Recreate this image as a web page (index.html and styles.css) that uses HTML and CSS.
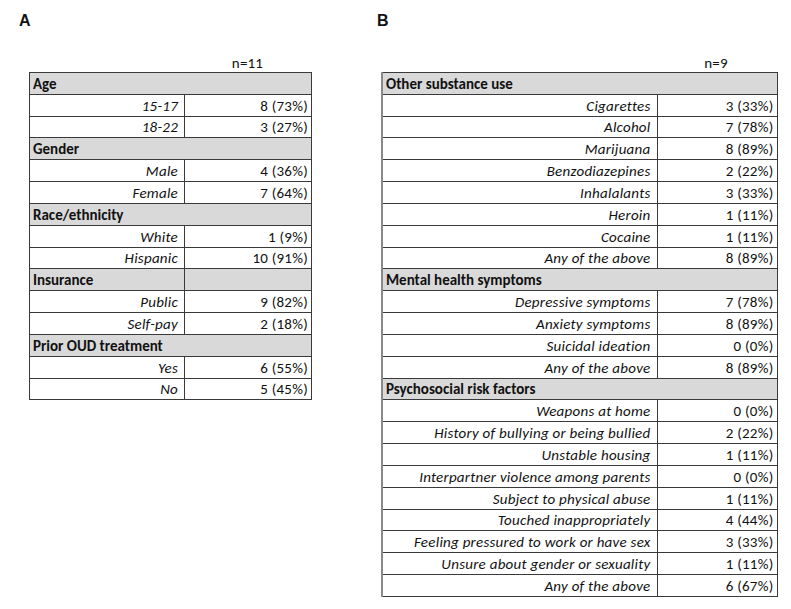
FILE: index.html
```html
<!DOCTYPE html>
<html>
<head>
<meta charset="utf-8">
<link rel="stylesheet" href="styles.css">
</head>
<body>
<div class="figure">
  <section class="panel panel-a">
    <div class="panel-label">A</div>
    <div class="table-wrap">
      <div class="n-row"><span class="n-spacer a-left"></span><span class="n-val a-right">n=11</span></div>
      <table class="data a">
        <colgroup><col class="a-left"><col class="a-right"></colgroup>
        <tr class="hdr"><td colspan="2">Age</td></tr>
        <tr><td class="lbl">15-17</td><td class="val">8 (73%)</td></tr>
        <tr><td class="lbl">18-22</td><td class="val">3 (27%)</td></tr>
        <tr class="hdr"><td colspan="2">Gender</td></tr>
        <tr><td class="lbl">Male</td><td class="val">4 (36%)</td></tr>
        <tr><td class="lbl">Female</td><td class="val">7 (64%)</td></tr>
        <tr class="hdr"><td colspan="2">Race/ethnicity</td></tr>
        <tr><td class="lbl">White</td><td class="val">1 (9%)</td></tr>
        <tr><td class="lbl">Hispanic</td><td class="val">10 (91%)</td></tr>
        <tr class="hdr"><td>Insurance</td><td></td></tr>
        <tr><td class="lbl">Public</td><td class="val">9 (82%)</td></tr>
        <tr><td class="lbl">Self-pay</td><td class="val">2 (18%)</td></tr>
        <tr class="hdr"><td colspan="2">Prior OUD treatment</td></tr>
        <tr><td class="lbl">Yes</td><td class="val">6 (55%)</td></tr>
        <tr><td class="lbl">No</td><td class="val">5 (45%)</td></tr>
      </table>
    </div>
  </section>
  <section class="panel panel-b">
    <div class="panel-label">B</div>
    <div class="table-wrap">
      <div class="n-row"><span class="n-spacer b-left"></span><span class="n-val b-right">n=9</span></div>
      <table class="data b">
        <colgroup><col class="b-left"><col class="b-right"></colgroup>
        <tr class="hdr"><td colspan="2">Other substance use</td></tr>
        <tr><td class="lbl">Cigarettes</td><td class="val">3 (33%)</td></tr>
        <tr><td class="lbl">Alcohol</td><td class="val">7 (78%)</td></tr>
        <tr><td class="lbl">Marijuana</td><td class="val">8 (89%)</td></tr>
        <tr><td class="lbl">Benzodiazepines</td><td class="val">2 (22%)</td></tr>
        <tr><td class="lbl">Inhalalants</td><td class="val">3 (33%)</td></tr>
        <tr><td class="lbl">Heroin</td><td class="val">1 (11%)</td></tr>
        <tr><td class="lbl">Cocaine</td><td class="val">1 (11%)</td></tr>
        <tr><td class="lbl">Any of the above</td><td class="val">8 (89%)</td></tr>
        <tr class="hdr"><td colspan="2">Mental health symptoms</td></tr>
        <tr><td class="lbl">Depressive symptoms</td><td class="val">7 (78%)</td></tr>
        <tr><td class="lbl">Anxiety symptoms</td><td class="val">8 (89%)</td></tr>
        <tr><td class="lbl">Suicidal ideation</td><td class="val">0 (0%)</td></tr>
        <tr><td class="lbl">Any of the above</td><td class="val">8 (89%)</td></tr>
        <tr class="hdr"><td colspan="2">Psychosocial risk factors</td></tr>
        <tr><td class="lbl">Weapons at home</td><td class="val">0 (0%)</td></tr>
        <tr><td class="lbl">History of bullying or being bullied</td><td class="val">2 (22%)</td></tr>
        <tr><td class="lbl">Unstable housing</td><td class="val">1 (11%)</td></tr>
        <tr><td class="lbl">Interpartner violence among parents</td><td class="val">0 (0%)</td></tr>
        <tr><td class="lbl">Subject to physical abuse</td><td class="val">1 (11%)</td></tr>
        <tr><td class="lbl">Touched inappropriately</td><td class="val">4 (44%)</td></tr>
        <tr><td class="lbl">Feeling pressured to work or have sex</td><td class="val">3 (33%)</td></tr>
        <tr><td class="lbl">Unsure about gender or sexuality</td><td class="val">1 (11%)</td></tr>
        <tr><td class="lbl">Any of the above</td><td class="val">6 (67%)</td></tr>
      </table>
    </div>
  </section>
</div>
</body>
</html>
```
FILE: styles.css
```css
html, body {
  margin: 0;
  padding: 0;
  background: #fff;
}
body {
  font-family: "Carlito", "Lato", "Liberation Sans", sans-serif;
  color: #111;
}
.figure {
  display: flex;
  padding: 13px 0 0 19px;
}
.panel {
  display: flex;
  flex-direction: column;
}
.panel-a {
  width: 358px;
}
.panel-label {
  font-family: "Liberation Sans", Arial, sans-serif;
  font-weight: bold;
  font-size: 16px;
  line-height: 16px;
  height: 16px;
}
.panel-a .table-wrap {
  margin-left: 10px;
}
.panel-b .table-wrap {
  margin-left: 4px;
}
.n-row {
  display: flex;
  margin-top: 25px;
  height: 18px;
  font-size: 15px;
  line-height: 18px;
  letter-spacing: 0.2px;
}
.n-val {
  text-align: center;
}
.a-left { width: 155px; }
.a-right { width: 127px; }
.b-left { width: 275px; }
.b-right { width: 120px; }
.data {
  border-collapse: collapse;
  table-layout: fixed;
  font-size: 15px;
  letter-spacing: 0.25px;
}
.data.a { width: 283px; }
.data.b { width: 396px; }
.data td {
  border: 1px solid #3a3a3a;
  height: 20.83px;
  padding: 0;
  line-height: 20px;
  white-space: nowrap;
  vertical-align: bottom;
}
.data.b tr > td:first-child {
  border-left: 2px solid #8a8a8a;
}
.data .hdr td {
  background: #d9d9d9;
  font-weight: bold;
  padding-left: 3px;
  letter-spacing: 0;
}
.data .lbl {
  font-style: italic;
  text-align: right;
  padding-right: 6px;
}
.data .val {
  text-align: right;
  padding-right: 3px;
}
```
